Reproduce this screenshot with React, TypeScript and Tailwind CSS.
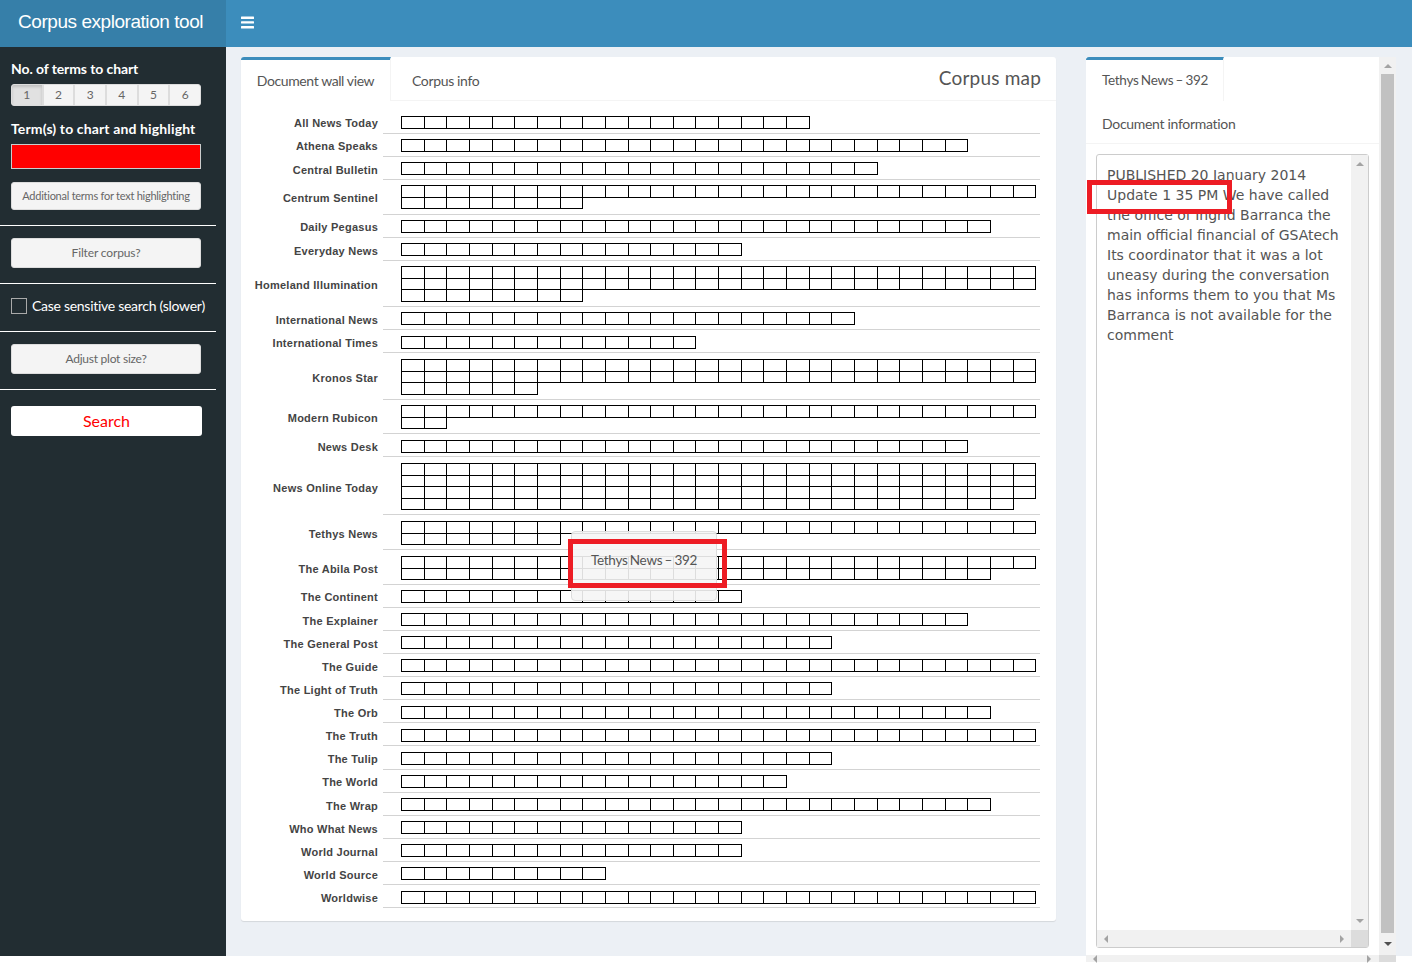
import React from "react";

const src = "font-['Lato','Noto_Sans',sans-serif]";

type Row = { name: string; counts: number[] };
const rows: Row[] = [
  { name: "All News Today", counts: [18] },
  { name: "Athena Speaks", counts: [25] },
  { name: "Central Bulletin", counts: [21] },
  { name: "Centrum Sentinel", counts: [28, 8] },
  { name: "Daily Pegasus", counts: [26] },
  { name: "Everyday News", counts: [15] },
  { name: "Homeland Illumination", counts: [28, 28, 8] },
  { name: "International News", counts: [20] },
  { name: "International Times", counts: [13] },
  { name: "Kronos Star", counts: [28, 28, 6] },
  { name: "Modern Rubicon", counts: [28, 2] },
  { name: "News Desk", counts: [25] },
  { name: "News Online Today", counts: [28, 28, 28, 27] },
  { name: "Tethys News", counts: [28, 7] },
  { name: "The Abila Post", counts: [28, 26] },
  { name: "The Continent", counts: [15] },
  { name: "The Explainer", counts: [25] },
  { name: "The General Post", counts: [19] },
  { name: "The Guide", counts: [28] },
  { name: "The Light of Truth", counts: [19] },
  { name: "The Orb", counts: [26] },
  { name: "The Truth", counts: [28] },
  { name: "The Tulip", counts: [19] },
  { name: "The World", counts: [17] },
  { name: "The Wrap", counts: [26] },
  { name: "Who What News", counts: [15] },
  { name: "World Journal", counts: [15] },
  { name: "World Source", counts: [9] },
  { name: "Worldwise", counts: [28] },
];

const CW = 22.65;
const CH = 11.55;
const UNIT = 11.567;

function Cells({ counts }: { counts: number[] }) {
  const h = Math.round(counts.length * CH) + 1;
  return (
    <svg width={637} height={h} className="block shrink-0 overflow-visible">
      {counts.map((n, r) =>
        Array.from({ length: n }).map((_, c) => (
          <rect
            key={r + "-" + c}
            x={Math.round(c * CW) + 0.5}
            y={Math.round(r * CH) + 0.5}
            width={Math.round((c + 1) * CW) - Math.round(c * CW)}
            height={Math.round((r + 1) * CH) - Math.round(r * CH)}
            fill="white"
            stroke="black"
            strokeWidth={1}
          />
        ))
      )}
    </svg>
  );
}

function WallRow({ row }: { row: Row }) {
  const height = (row.counts.length + 1) * UNIT;
  return (
    <div className="flex items-stretch" style={{ height }}>
      <div className="w-[137px] shrink-0 flex items-center justify-end pt-[3px] font-['Liberation_Sans',sans-serif] font-bold text-[11px] tracking-[0.25px] text-[#444]">
        {row.name}
      </div>
      <div className="ml-[5px] w-[657px] shrink-0 border-b border-[#d3d3d3] pl-[18px] pt-[1.5px] flex items-center">
        <Cells counts={row.counts} />
      </div>
    </div>
  );
}

function Arrow({ dir, color = "#a3a3a3" }: { dir: "up" | "down" | "left" | "right"; color?: string }) {
  const pts = {
    up: "0,6 8,6 4,2",
    down: "0,2 8,2 4,6",
    left: "6,0 6,8 2,4",
    right: "2,0 2,8 6,4",
  }[dir];
  return (
    <svg width={8} height={8} className="block">
      <polygon points={pts} fill={color} />
    </svg>
  );
}

function SideBtn({ children, h, text }: { children: React.ReactNode; h: string; text: string }) {
  return (
    <div
      className={`mx-[11px] w-[190px] ${h} ${text} flex items-center justify-center rounded-[3px] bg-[#f4f4f4] border border-[#ddd] text-[#666]`}
    >
      {children}
    </div>
  );
}

export default function App() {
  return (
    <div className={`w-[1412px] h-[963px] overflow-hidden bg-white ${src}`}>
      <div className="h-[956px] flex flex-col bg-[#ecf0f5]">
        <header className="h-[47px] flex shrink-0">
          <div className="w-[226px] bg-[#367fa9] flex items-center pl-[18px] pb-[3px] text-white text-[19px] tracking-[-0.45px] font-['Liberation_Sans',sans-serif]">
            Corpus exploration tool
          </div>
          <div className="flex-1 bg-[#3c8dbc] flex items-center pl-[15px] pb-[3px]">
            <svg width={13} height={13} viewBox="0 0 13 13" className="block">
              <rect x="0" y="0.5" width="13" height="2.4" rx="0.5" fill="#fff" />
              <rect x="0" y="5.2" width="13" height="2.4" rx="0.5" fill="#fff" />
              <rect x="0" y="10" width="13" height="2.4" rx="0.5" fill="#fff" />
            </svg>
          </div>
        </header>
        <div className="flex flex-1 min-h-0">
          <aside className="w-[226px] shrink-0 bg-[#222d32] flex flex-col text-white">
            <div className="pl-[11px] mt-[13px] h-[18px] leading-[18px] text-[14px] font-bold tracking-[-0.1px]">No. of terms to chart</div>
            <div className="mx-[11px] mt-[6px] w-[190px] h-[22px] flex rounded-[3px] overflow-hidden border border-[#ddd] bg-[#f4f4f4] text-[12px] text-[#666]">
              {[1, 2, 3, 4, 5, 6].map((n, i) => (
                <div
                  key={n}
                  className={`flex-1 flex items-center justify-center ${i > 0 ? "border-l-2 border-[#ddd]" : ""} ${
                    i === 0 ? "bg-[#e1e1e1] shadow-[inset_0_2px_3px_rgba(0,0,0,0.15)]" : ""
                  }`}
                >
                  {n}
                </div>
              ))}
            </div>
            <div className="pl-[11px] mt-[14px] h-[18px] leading-[18px] text-[14px] font-bold tracking-[0.13px]">Term(s) to chart and highlight</div>
            <div className="mx-[11px] mt-[6px] w-[190px] h-[25px] bg-[#ff0000] border border-[#ccc]" />
            <div className="mt-[13px]">
              <SideBtn h="h-[28px]" text="text-[11px] tracking-[-0.25px]">
                Additional terms for text highlighting
              </SideBtn>
            </div>
            <div className="mt-[15px] w-[216px] h-px bg-white" />
            <div className="mt-[12px]">
              <SideBtn h="h-[30px]" text="text-[12px] tracking-[-0.15px]">Filter corpus?</SideBtn>
            </div>
            <div className="mt-[15px] w-[216px] h-px bg-white" />
            <div className="mt-[14px] pl-[11px] flex items-center h-[16px]">
              <div className="w-[16px] h-[16px] border border-[#aaa]" />
              <span className="ml-[5px] pb-[2px] text-[14px] tracking-[-0.28px]">Case sensitive search (slower)</span>
            </div>
            <div className="mt-[17px] w-[216px] h-px bg-white" />
            <div className="mt-[12px]">
              <SideBtn h="h-[30px]" text="text-[12px] tracking-[-0.25px]">Adjust plot size?</SideBtn>
            </div>
            <div className="mt-[15px] w-[216px] h-px bg-white" />
            <div className="mt-[16px] mx-[11px] w-[191px] h-[30px] bg-white rounded-[3px] flex items-center justify-center text-[#ff0000] text-[16px]">
              Search
            </div>
          </aside>
          <main className="flex-1 flex items-start pt-[10px] pl-[15px]">
            <section className="relative w-[815px] h-[864px] bg-white rounded-[3px] shadow-[0_1px_1px_rgba(0,0,0,0.1)] shrink-0">
              <div className="h-[44px] flex items-stretch border-b border-[#f4f4f4] text-[14px] text-[#555]">
                <div className="w-[150px] border-t-[3px] border-[#3c8dbc] border-r border-r-[#f4f4f4] flex items-center justify-center rounded-tl-[3px] -mb-px bg-white tracking-[-0.4px]">
                  Document wall view
                </div>
                <div className="ml-[21px] flex items-center pt-[3px] tracking-[-0.35px]">Corpus info</div>
                <div className="ml-auto pr-[15px] flex items-center text-[19px] tracking-[0.2px] text-[#555]">Corpus map</div>
              </div>
              <div className="pt-[9.5px]">
                {rows.map((r) => (
                  <WallRow key={r.name} row={r} />
                ))}
              </div>
              <div className="absolute left-[330px] top-[474px] w-[146px] h-[70px] rounded-[4px] border border-[#ddd] bg-[rgba(245,245,245,0.9)] flex items-center justify-center pb-[12px] text-[13.5px] text-[#555] tracking-[-0.3px] [word-spacing:-0.8px]">
                Tethys News – 392
              </div>
              <div className="absolute left-[327px] top-[482px] w-[159px] h-[49px] border-[5px] border-[#ed1c24]" />
            </section>
            <section className="ml-[30px] w-[293px] h-[898px] bg-white shrink-0 flex flex-col relative text-[14px] text-[#555]">
              <div className="h-[44px] flex shrink-0">
                <div className="w-[138px] border-t-[3px] border-[#3c8dbc] border-r border-r-[#f4f4f4] rounded-tl-[3px] flex items-center pl-[16px] text-[13.5px] tracking-[-0.3px] [word-spacing:-0.8px]">
                  Tethys News – 392
                </div>
              </div>
              <div className="h-[43px] shrink-0 border-b border-[#f4f4f4] flex items-center pl-[16px] pt-[2px] tracking-[-0.3px]">Document information</div>
              <div className="mt-[10px] ml-[10px] w-[273px] h-[794px] border border-[#ccc] rounded-[3px] flex flex-col shrink-0">
                <div className="flex flex-1 min-h-0">
                  <div className="flex-1 pl-[10px] pr-[6px] pt-[10px] font-['DejaVu_Sans',sans-serif] text-[14px] leading-[20px] text-[#555]">
                    PUBLISHED 20 January 2014 Update 1 35 PM We have called the office of Ingrid Barranca the main official financial of GSAtech Its coordinator that it was a lot uneasy during the conversation has informs them to you that Ms Barranca is not available for the comment
                  </div>
                  <div className="w-[17px] shrink-0 bg-[#f1f1f1] flex flex-col justify-between items-center py-[5px]">
                    <Arrow dir="up" />
                    <Arrow dir="down" />
                  </div>
                </div>
                <div className="h-[17px] shrink-0 flex">
                  <div className="flex-1 bg-[#f1f1f1] flex items-center justify-between px-[5px]">
                    <Arrow dir="left" />
                    <Arrow dir="right" />
                  </div>
                  <div className="w-[17px] bg-[#dcdcdc]" />
                </div>
              </div>
              <div className="absolute left-[1px] top-[123px] w-[145px] h-[34px] border-[5px] border-[#ed1c24]" />
            </section>
            <div className="w-[17px] h-[898px] bg-[#f1f1f1] shrink-0 flex flex-col items-center">
              <div className="h-[17px] flex items-center justify-center">
                <Arrow dir="up" />
              </div>
              <div className="w-[13px] h-[859px] bg-[#c1c1c1]" />
              <div className="flex-1 flex items-center justify-center">
                <Arrow dir="down" color="#505050" />
              </div>
            </div>
          </main>
        </div>
      </div>
      <div className="ml-[1086px] w-[310px] h-[7px] bg-[#f1f1f1] flex -mt-px">
        <div className="w-[293px] pl-[5px] pr-[6px] flex justify-between">
          <Arrow dir="left" />
          <Arrow dir="right" />
        </div>
        <div className="w-[17px] bg-[#dcdcdc]" />
      </div>
    </div>
  );
}
